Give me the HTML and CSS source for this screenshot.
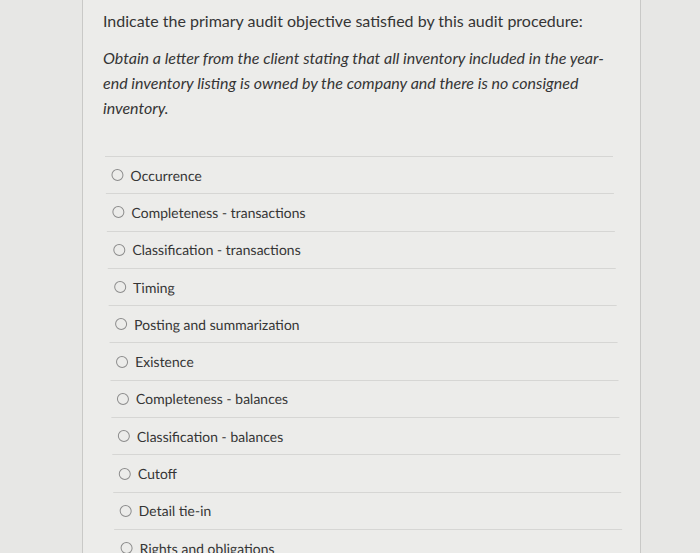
FILE: index.html
```html
<!DOCTYPE html>
<html>
<head>
<meta charset="utf-8">
<link rel="stylesheet" href="styles.css">
</head>
<body>
<div class="page">
  <div class="card">
    <p class="title">Indicate the primary audit objective satisfied by this audit procedure:</p>
    <p class="proc">Obtain a letter from the client stating that all inventory included in the year-end inventory listing is owned by the company and there is no consigned inventory.</p>
    <ul class="options">
      <li class="opt"><span class="radio"></span><span>Occurrence</span></li>
      <li class="opt"><span class="radio"></span><span>Completeness - transactions</span></li>
      <li class="opt"><span class="radio"></span><span>Classification - transactions</span></li>
      <li class="opt"><span class="radio"></span><span>Timing</span></li>
      <li class="opt"><span class="radio"></span><span>Posting and summarization</span></li>
      <li class="opt"><span class="radio"></span><span>Existence</span></li>
      <li class="opt"><span class="radio"></span><span>Completeness - balances</span></li>
      <li class="opt"><span class="radio"></span><span>Classification - balances</span></li>
      <li class="opt"><span class="radio"></span><span>Cutoff</span></li>
      <li class="opt"><span class="radio"></span><span>Detail tie-in</span></li>
      <li class="opt"><span class="radio"></span><span>Rights and obligations</span></li>
    </ul>
  </div>
</div>
</body>
</html>
```

FILE: styles.css
```css
html, body {
  margin: 0;
  padding: 0;
  height: 553px;
  overflow: hidden;
  background: #e7e7e5;
}
.page {
  width: 700px;
  height: 553px;
  padding-left: 82px;
  box-sizing: border-box;
  font-family: Lato, "Open Sans", sans-serif;
  color: #353535;
}
.card {
  width: 559px;
  height: 553px;
  box-sizing: border-box;
  border-left: 1px solid #c9c9c7;
  border-right: 1px solid #c9c9c7;
  background: #ececea;
  padding: 8px 20px 0 20px;
}
.title {
  margin: 0;
  font-size: 16px;
  line-height: 25px;
}
.proc {
  margin: 12px 0 0 0;
  font-size: 16px;
  line-height: 25px;
  font-style: italic;
  width: 510px;
}
.options {
  list-style: none;
  margin: 36px 0 0 2px;
  padding: 0;
  width: 508px;
  transform: skewX(1.4deg);
  transform-origin: 0 0;
}
.opt {
  height: 37.3px;
  box-sizing: border-box;
  border-top: 1px solid #d6d6d4;
  display: flex;
  align-items: center;
  gap: 7px;
  padding-left: 6px;
  font-size: 14px;
}
.radio {
  width: 10px;
  height: 10px;
  border: 1.5px solid #8c8c8c;
  border-radius: 50%;
  flex: none;
}
```
